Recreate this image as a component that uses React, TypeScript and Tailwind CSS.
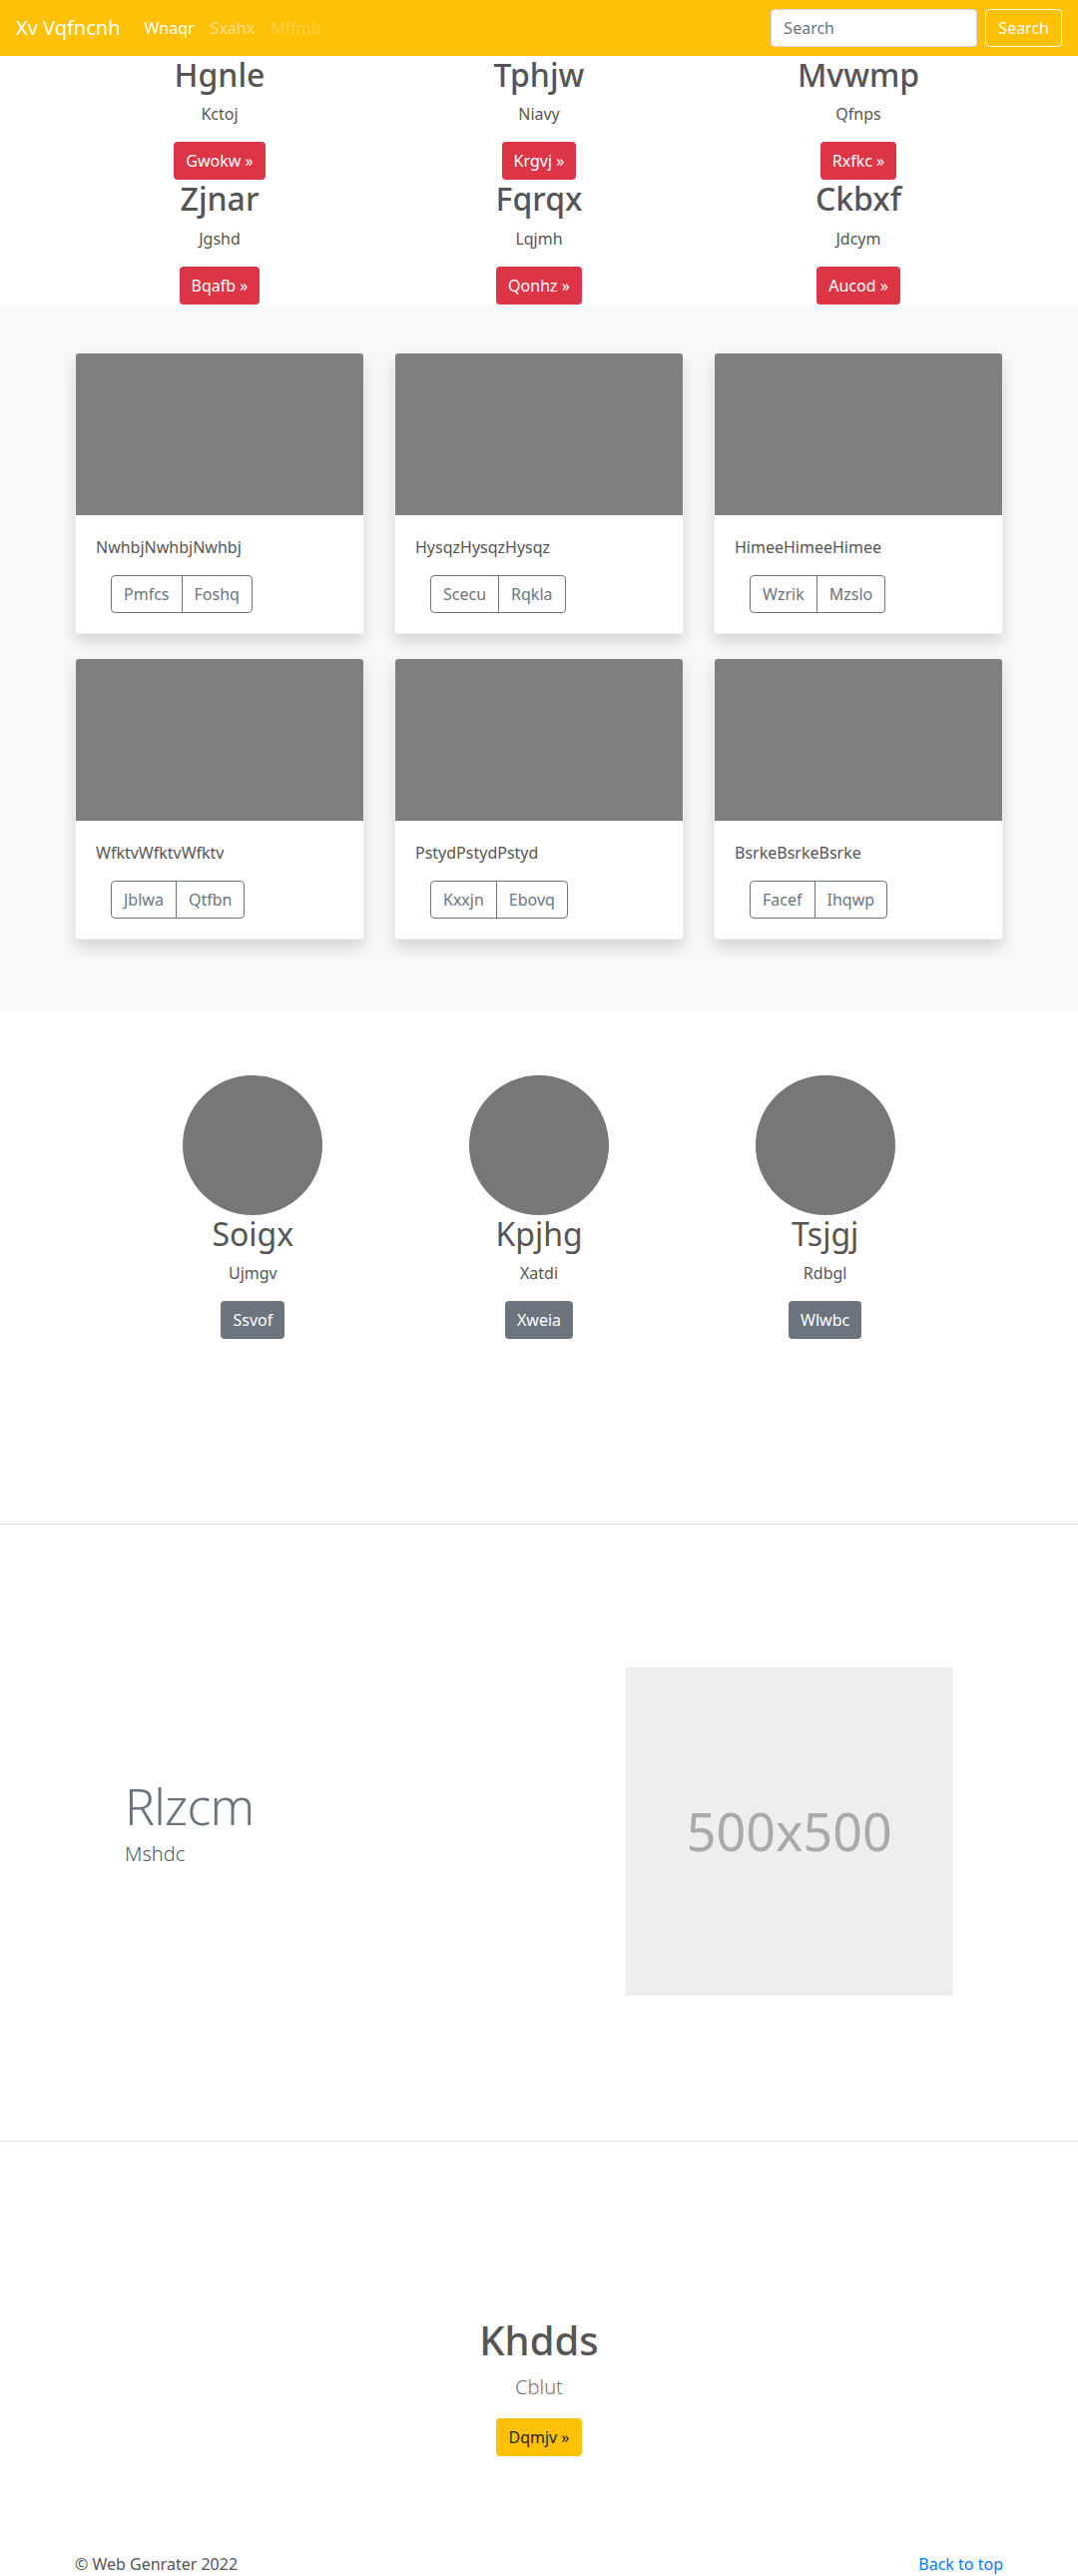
import React from "react";

const topItems = [
  { title: "Hgnle", text: "Kctoj", btn: "Gwokw" },
  { title: "Tphjw", text: "Niavy", btn: "Krgvj" },
  { title: "Mvwmp", text: "Qfnps", btn: "Rxfkc" },
  { title: "Zjnar", text: "Jgshd", btn: "Bqafb" },
  { title: "Fqrqx", text: "Lqjmh", btn: "Qonhz" },
  { title: "Ckbxf", text: "Jdcym", btn: "Aucod" },
];

const cards = [
  { text: "NwhbjNwhbjNwhbj", a: "Pmfcs", b: "Foshq" },
  { text: "HysqzHysqzHysqz", a: "Scecu", b: "Rqkla" },
  { text: "HimeeHimeeHimee", a: "Wzrik", b: "Mzslo" },
  { text: "WfktvWfktvWfktv", a: "Jblwa", b: "Qtfbn" },
  { text: "PstydPstydPstyd", a: "Kxxjn", b: "Ebovq" },
  { text: "BsrkeBsrkeBsrke", a: "Facef", b: "Ihqwp" },
];

const people = [
  { name: "Soigx", text: "Ujmgv", btn: "Ssvof" },
  { name: "Kpjhg", text: "Xatdi", btn: "Xweia" },
  { name: "Tsjgj", text: "Rdbgl", btn: "Wlwbc" },
];

const App = () => {
  return (
    <div className="font-['Noto_Sans','Open_Sans',sans-serif] text-[#555] text-base bg-white">
      {/* Navbar */}
      <nav className="h-14 bg-[#ffc107] flex items-center px-4">
        <span className="text-xl text-white mr-4 leading-[30px]">Xv Vqfncnh</span>
        <a className="px-2 text-white">Wnaqr</a>
        <a className="px-2 text-white/50">Sxahx</a>
        <a className="px-2 text-white/25">Mffmb</a>
        <div className="ml-auto flex items-center">
          <input
            type="text"
            placeholder="Search"
            className="w-[207px] h-[38px] bg-white border border-[#ced4da] rounded px-3 text-[#495057] placeholder:text-[#6c757d] outline-none"
          />
          <button className="ml-2 h-[38px] px-3 rounded border border-[#f8f9fa] text-[#f8f9fa]">
            Search
          </button>
        </div>
      </nav>

      {/* Top items */}
      <div className="w-[960px] mx-auto grid grid-cols-3">
        {topItems.map((it) => (
          <div key={it.title} className="px-[15px] flex flex-col items-center text-center">
            <h2 className="text-[32px] font-medium leading-[38.4px] mb-2">{it.title}</h2>
            <p className="leading-6 mb-4">{it.text}</p>
            <button className="h-[38px] px-3 rounded bg-[#dc3545] text-white">
              {it.btn} &raquo;
            </button>
          </div>
        ))}
      </div>

      {/* Album */}
      <section className="bg-[#f8f9fa] py-12">
        <div className="w-[930px] mx-auto grid grid-cols-3 gap-x-[30px]">
          {cards.map((c) => (
            <div
              key={c.text}
              className="mb-6 bg-white rounded border border-black/5 shadow-[0_0.5rem_1rem_rgba(0,0,0,0.15)] overflow-hidden"
            >
              <div className="aspect-video bg-[#7f7f7f]" />
              <div className="p-5">
                <p className="leading-6 mb-4">{c.text}</p>
                <div className="ml-[15px] inline-flex rounded border border-[#6c757d] text-[#6c757d]">
                  <button className="h-[36px] px-3">{c.a}</button>
                  <button className="h-[36px] px-3 border-l border-[#6c757d]">{c.b}</button>
                </div>
              </div>
            </div>
          ))}
        </div>
      </section>

      {/* Marketing */}
      <section className="pt-16 pb-[185px]">
        <div className="w-[860px] mx-auto grid grid-cols-3">
          {people.map((p) => (
            <div key={p.name} className="px-[15px] flex flex-col items-center text-center">
              <div className="w-[140px] h-[140px] rounded-full bg-[#777]" />
              <h2 className="text-[32px] font-normal leading-[38.4px] mb-2">{p.name}</h2>
              <p className="leading-6 mb-4">{p.text}</p>
              <button className="h-[38px] px-3 rounded bg-[#6c757d] text-white">{p.btn}</button>
            </div>
          ))}
        </div>
      </section>

      <hr className="border-0 h-px bg-[#e5e5e5]" />

      {/* Featurette */}
      <section className="pt-[143px] pb-[145px]">
        <div className="w-[860px] mx-auto grid grid-cols-12 items-center">
          <div className="col-span-7 px-[15px] pt-[3px]">
            <h2 className="text-[50px] font-light leading-none tracking-[-0.05rem] text-[#6c757d] mb-2">
              Rlzcm
            </h2>
            <p className="text-xl font-light leading-[30px] mb-4">Mshdc</p>
          </div>
          <div className="col-span-5 px-[15px]">
            <div className="aspect-square bg-[#eee] flex items-center justify-center">
              <span className="text-[52px] text-[#aaa]">500x500</span>
            </div>
          </div>
        </div>
      </section>

      <hr className="border-0 h-px bg-[#e5e5e5]" />

      {/* Call to action */}
      <section className="pt-[175px] flex flex-col items-center text-center">
        <h1 className="text-[40px] font-medium leading-[48px] mb-2">Khdds</h1>
        <p className="text-xl font-light leading-[30px] mb-4 text-[#6c757d]">Cblut</p>
        <button className="h-[38px] px-3 rounded bg-[#ffc107] text-[#212529]">Dqmjv &raquo;</button>
      </section>

      {/* Footer */}
      <footer className="w-[930px] mx-auto pt-[96px] pb-12 flex justify-between">
        <p className="leading-6">&copy; Web Genrater 2022</p>
        <a className="leading-6 text-[#007bff]">Back to top</a>
      </footer>
    </div>
  );
};

export default App;
